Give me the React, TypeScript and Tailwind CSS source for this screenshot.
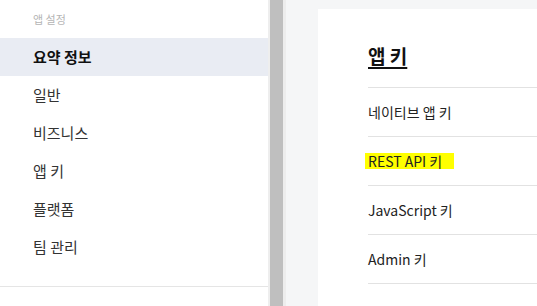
const menu = ['요약 정보', '일반', '비즈니스', '앱 키', '플랫폼', '팀 관리'];
const keys = ['네이티브 앱 키', 'REST API 키', 'JavaScript 키', 'Admin 키'];

export default function App() {
  return (
    <div
      className="flex h-[306px] w-[537px] overflow-hidden bg-white"
      style={{ fontFamily: '"Noto Sans CJK KR", "Noto Sans", sans-serif' }}
    >
      {/* Sidebar */}
      <aside className="flex w-[268px] shrink-0 flex-col">
        <div className="flex h-[38px] items-center pl-[33px] text-[11px] text-[#b5b5b5]">앱 설정</div>
        <ul>
          {menu.map((item, i) => (
            <li
              key={item}
              className={
                i === 0
                  ? 'flex h-[38px] items-center bg-[#e9ecf3] pl-[33px] text-[15px] font-bold text-[#111111]'
                  : 'flex h-[38px] items-center pl-[33px] text-[15px] text-[#333333]'
              }
            >
              {item}
            </li>
          ))}
        </ul>
        <div className="mt-[20px] border-t border-[#e5e5e5]" />
      </aside>

      {/* Splitter */}
      <div className="w-[2px] shrink-0 bg-[#eeeeee]" />
      <div className="w-[13px] shrink-0 bg-[#bfbfbf]" />
      <div className="w-[3px] shrink-0 bg-[#ededed]" />

      {/* Main */}
      <main className="flex-1 bg-[#f5f6f7] pl-[32px] pt-[9px]">
        <div className="h-full bg-white pl-[50px]">
          <h2 className="flex h-[78px] items-end pb-[19px] text-[19px] font-bold leading-[24px] text-[#111111] underline decoration-2 underline-offset-[3px]">
            앱 키
          </h2>
          <ul>
            {keys.map((k, i) => (
              <li key={k} className="flex h-[49px] items-center border-t border-[#e2e2e2] text-[14px] text-[#222222]">
                {i === 1 ? (
                  <span className="-ml-[3px] bg-[#ffff00] pl-[3px] pr-[12px] leading-[16px]">{k}</span>
                ) : (
                  k
                )}
              </li>
            ))}
            <li className="border-t border-[#e2e2e2]" />
          </ul>
        </div>
      </main>
    </div>
  );
}
